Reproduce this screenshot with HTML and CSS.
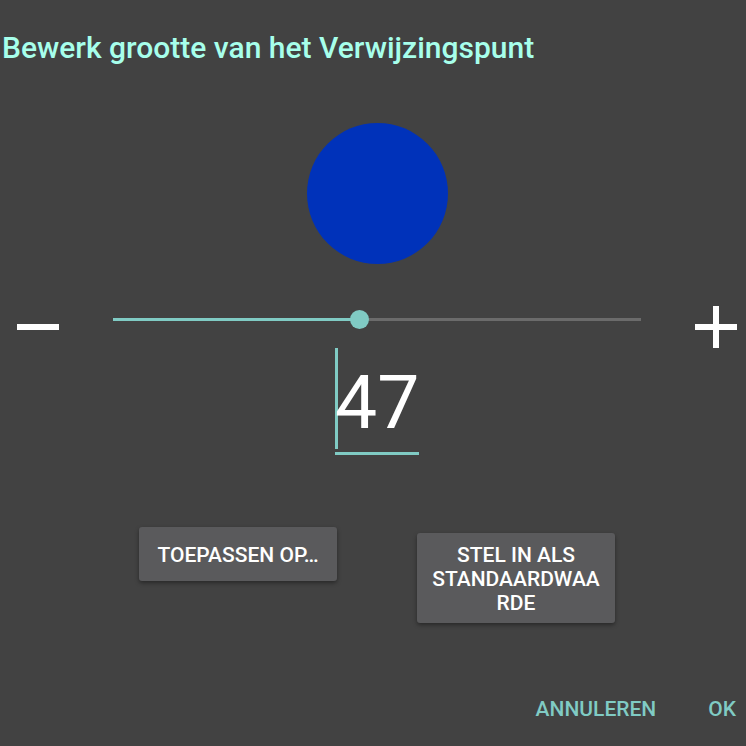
FILE: index.html
```html
<!DOCTYPE html>
<html lang="nl">
<head>
<meta charset="utf-8">
<meta name="viewport" content="width=device-width, initial-scale=1">
<title>Bewerk grootte van het Verwijzingspunt</title>
<link rel="stylesheet" href="styles.css">
</head>
<body>
<form class="dialog">
  <h1 class="title"><label for="size">Bewerk grootte van het Verwijzingspunt</label></h1>
  <div class="preview"></div>
  <div class="slider-row">
    <button class="step" type="button" aria-label="Kleiner">
      <svg viewBox="0 0 42 42"><path d="M0 18h42v6H0z"/></svg>
    </button>
    <input class="slider" type="range" min="1" max="100" value="47" aria-label="Grootte">
    <button class="step" type="button" aria-label="Groter">
      <svg viewBox="0 0 42 42"><path d="M18 0h6v18h18v6H24v18h-6V24H0v-6h18z"/></svg>
    </button>
  </div>
  <div class="number">
    <input class="number-input" id="size" type="text" inputmode="numeric" value="47">
  </div>
  <div class="options">
    <button class="raised" type="button">TOEPASSEN OP…</button>
    <button class="raised" type="button">STEL IN ALS STANDAARDWAARDE</button>
  </div>
  <div class="actions">
    <button class="flat" type="button">ANNULEREN</button>
    <button class="flat" type="submit">OK</button>
  </div>
</form>
</body>
</html>
```

FILE: styles.css
```css
* {
  box-sizing: border-box;
}

body {
  margin: 0;
  background: #424242;
  color: #fff;
  font-family: Roboto, "Liberation Sans", sans-serif;
}

button,
input {
  margin: 0;
  padding: 0;
  border: 0;
  background: none;
  color: inherit;
  font: inherit;
}

.dialog {
  --accent: #80cbc4;
  display: flex;
  flex-direction: column;
  min-height: 100vh;
  padding-bottom: 23px;
}

.title {
  margin: 30px 0 0;
  padding: 0 2px;
  color: #a7ffeb;
  font-size: 30px;
  font-weight: 500;
  line-height: 36px;
}

.preview {
  align-self: center;
  width: 141px;
  height: 141px;
  margin: 57px 0 42px 8px;
  border-radius: 50%;
  background: #0032ba;
}

.slider-row {
  display: flex;
  align-items: flex-start;
  gap: 54px;
  padding: 0 9px 0 17px;
}

.step {
  flex: none;
  width: 42px;
  height: 42px;
}

.step svg {
  display: block;
  fill: #fff;
}

.slider {
  flex: 1;
  min-width: 0;
  height: 27px;
  appearance: none;
}

.slider::-webkit-slider-runnable-track {
  height: 3px;
  background: linear-gradient(to right, var(--accent) 47%, #6b6b6b 47%);
}

.slider::-webkit-slider-thumb {
  width: 19px;
  height: 19px;
  margin-top: -8px;
  border-radius: 50%;
  background: var(--accent);
  appearance: none;
}

.number {
  position: relative;
  align-self: center;
  margin-left: 8px;
  border-bottom: 3px solid var(--accent);
}

/* Text cursor behind the first digit */
.number::before {
  content: "";
  position: absolute;
  top: 0;
  left: 0;
  width: 3px;
  height: 101px;
  background: var(--accent);
}

.number-input {
  position: relative;
  display: block;
  width: 84px;
  height: 104px;
  padding-top: 4px;
  outline: 0;
  font-size: 75px;
}

.options {
  display: flex;
  align-items: baseline;
  justify-content: center;
  gap: 80px;
  margin: 72px 0 48px;
  padding-left: 8px;
}

.raised {
  width: 198px;
  min-height: 54px;
  padding: 10px 12px 8px;
  border-radius: 3px;
  background: #5a5a5c;
  box-shadow: 0 2px 4px rgba(0, 0, 0, 0.4);
  font-size: 21px;
  font-weight: 500;
  line-height: 24px;
  overflow-wrap: anywhere;
}

.actions {
  display: flex;
  justify-content: flex-end;
  gap: 52px;
  margin-top: auto;
  padding-right: 10px;
}

.flat {
  color: var(--accent);
  font-size: 21px;
  font-weight: 500;
  line-height: 28px;
}
```
